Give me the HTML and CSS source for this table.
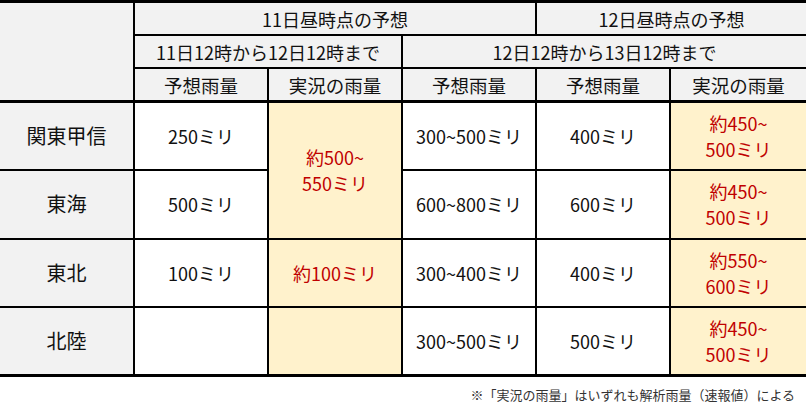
FILE: index.html
```html
<!DOCTYPE html>
<html lang="ja">
<head>
<meta charset="utf-8">
<link rel="stylesheet" href="styles.css">
</head>
<body>
<table class="rain">
  <colgroup>
    <col class="c"><col class="c"><col class="c"><col class="c"><col class="c"><col class="c-last">
  </colgroup>
  <thead>
    <tr class="h">
      <th class="corner" rowspan="3"></th>
      <th colspan="3">11日昼時点の予想</th>
      <th colspan="2" class="last">12日昼時点の予想</th>
    </tr>
    <tr class="h">
      <th colspan="2">11日12時から12日12時まで</th>
      <th colspan="3" class="last">12日12時から13日12時まで</th>
    </tr>
    <tr class="h h3">
      <th>予想雨量</th>
      <th>実況の雨量</th>
      <th>予想雨量</th>
      <th>予想雨量</th>
      <th class="last">実況の雨量</th>
    </tr>
  </thead>
  <tbody>
    <tr>
      <th class="region">関東甲信</th>
      <td>250ミリ</td>
      <td class="obs" rowspan="2">約500~<br>550ミリ</td>
      <td>300~500ミリ</td>
      <td>400ミリ</td>
      <td class="obs last">約450~<br>500ミリ</td>
    </tr>
    <tr>
      <th class="region">東海</th>
      <td>500ミリ</td>
      <td>600~800ミリ</td>
      <td>600ミリ</td>
      <td class="obs last">約450~<br>500ミリ</td>
    </tr>
    <tr>
      <th class="region">東北</th>
      <td>100ミリ</td>
      <td class="obs">約100ミリ</td>
      <td>300~400ミリ</td>
      <td>400ミリ</td>
      <td class="obs last">約550~<br>600ミリ</td>
    </tr>
    <tr>
      <th class="region">北陸</th>
      <td></td>
      <td class="obs"></td>
      <td>300~500ミリ</td>
      <td>500ミリ</td>
      <td class="obs last">約450~<br>500ミリ</td>
    </tr>
  </tbody>
</table>
<p class="note">※「実況の雨量」はいずれも解析雨量（速報値）による</p>
</body>
</html>
```

FILE: styles.css
```css
html, body {
  margin: 0;
  padding: 0;
  background: #ffffff;
}

body {
  font-family: "Noto Sans CJK JP", "Noto Sans", sans-serif;
  color: #111111;
  width: 806px;
}

.rain {
  width: 806px;
  border-collapse: collapse;
  table-layout: fixed;
  border-top: 3px solid #000;
  border-bottom: 3px solid #000;
}

.rain .c {
  width: 134px;
}

.rain .c-last {
  width: 136px;
}

.rain th,
.rain td {
  border: 2px solid #000;
  padding: 0;
  text-align: center;
  vertical-align: middle;
  font-weight: normal;
  line-height: 26px;
}

.rain thead th {
  background: #f2f2f2;
  font-size: 18px;
  height: 31px;
}

.rain .h3 th {
  border-bottom: 3px solid #000;
  font-size: 18.5px;
}

.rain .corner {
  border-left: none;
  border-bottom: 3px solid #000;
}

.rain .last {
  border-right: none;
}

.rain tbody tr {
  height: 68.5px;
}

.rain tbody td {
  font-size: 18px;
  background: #ffffff;
}

.rain .region {
  background: #f2f2f2;
  border-left: none;
  font-size: 20px;
}

.rain td.obs {
  background: #fff2cc;
  color: #c00000;
}

.note {
  margin: 9px 11px 0 0;
  text-align: right;
  font-size: 13px;
  color: #333333;
  line-height: 18px;
}
```
